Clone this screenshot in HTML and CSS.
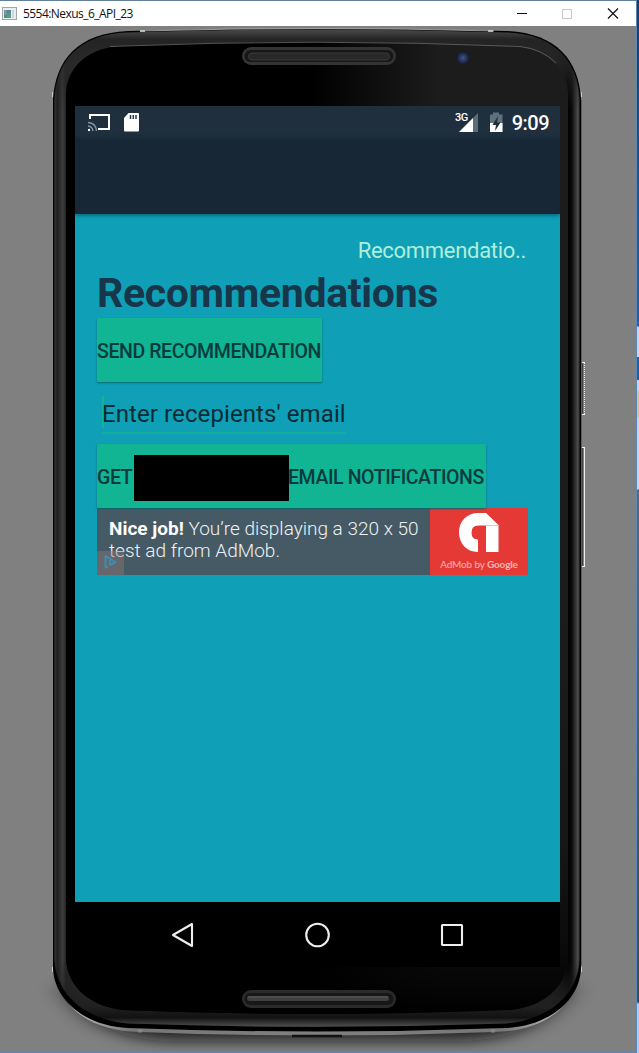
FILE: index.html
```
<!DOCTYPE html>
<html lang="en">
<head>
<meta charset="utf-8">
<title>5554:Nexus_6_API_23</title>
<link rel="stylesheet" href="styles.css">
</head>
<body>
<div class="desktop">
<div class="window">
  <header class="titlebar">
    <svg class="app-icon" width="15" height="13" viewBox="0 0 15 13"><rect x=".5" y=".5" width="14" height="12" fill="#e9eef2" stroke="#a2a6aa"/><rect x="2" y="3" width="7" height="8" fill="#528b91"/><path d="M2 3h3v5H2z" fill="#7894ad"/><path d="M5 6h4v5H4z" fill="#579c7d"/><path d="M10 3h2v8h-2z" fill="#cdd8df"/></svg>
    <span class="title">5554:Nexus_6_API_23</span>
    <svg class="controls" width="106" height="13" viewBox="0 0 106 13" fill="none"><path d="M0 6.5h10" stroke="#111"/><rect x="45.500" y="2.500" width="9" height="9" stroke="#c9c9c9"/><path d="M91 1.500l10 10M101 1.500l-10 10" stroke="#111" stroke-width="1.200"/></svg>
  </header>
  <main class="stage">
    <svg class="shell" width="637" height="1026" viewBox="0 26 637 1026">
      <defs>
        <linearGradient id="rimX" gradientUnits="userSpaceOnUse" x1="53" y1="0" x2="581" y2="0">
          <stop offset="0" stop-color="#444"/><stop offset=".008" stop-color="#1e1e1e"/><stop offset=".018" stop-color="#3c3c3c"/><stop offset=".025" stop-color="#242424"/><stop offset=".06" stop-color="#303030"/><stop offset=".94" stop-color="#1c1c1c"/><stop offset=".974" stop-color="#000"/><stop offset=".982" stop-color="#080808"/><stop offset=".994" stop-color="#4c4c4c"/><stop offset="1" stop-color="#161616"/>
        </linearGradient>
        <linearGradient id="rimTop" gradientUnits="userSpaceOnUse" x1="0" y1="29" x2="0" y2="110">
          <stop offset="0" stop-color="#4b4b4b"/><stop offset=".13" stop-color="#242424"/><stop offset=".5" stop-color="#292929" stop-opacity=".7"/><stop offset="1" stop-color="#222" stop-opacity="0"/>
        </linearGradient>
        <linearGradient id="rimBottom" gradientUnits="userSpaceOnUse" x1="0" y1="960" x2="0" y2="1027">
          <stop offset="0" stop-color="#222" stop-opacity="0"/><stop offset=".7" stop-color="#202020"/><stop offset=".86" stop-color="#121212"/><stop offset="1" stop-color="#515151"/>
        </linearGradient>
        <linearGradient id="face" gradientUnits="userSpaceOnUse" x1="310" y1="0" x2="440" y2="0">
          <stop offset="0" stop-color="#000"/><stop offset="1" stop-color="#1c1c1c"/>
        </linearGradient>
        <linearGradient id="faceFade" x1="0" y1="0" x2="0" y2="1">
          <stop offset="0" stop-color="#000" stop-opacity="0"/><stop offset=".6" stop-color="#000" stop-opacity=".2"/><stop offset=".92" stop-color="#000" stop-opacity=".78"/><stop offset="1" stop-color="#000"/>
        </linearGradient>
        <linearGradient id="silver" gradientUnits="userSpaceOnUse" x1="53" y1="0" x2="581" y2="0">
          <stop offset="0" stop-color="#ccc"/><stop offset=".15" stop-color="#777"/><stop offset=".5" stop-color="#808080"/><stop offset=".85" stop-color="#777"/><stop offset="1" stop-color="#ccc"/>
        </linearGradient>
        <radialGradient id="lens"><stop offset="0" stop-color="#40568c"/><stop offset=".5" stop-color="#27345a"/><stop offset="1" stop-color="#15171f"/></radialGradient>
        <filter id="soft" x="-20%" y="-60%" width="140%" height="220%"><feGaussianBlur stdDeviation="14 7"/></filter>
      </defs>
      <path d="M64 985Q90 1038 170 1041H464Q544 1038 570 985Z" fill="#111" opacity=".8" filter="url(#soft)"/>
      <path d="M53 960C55 1004 86 1031 140 1032Q317 1039 494 1032C548 1031 579 1004 581 960Z" fill="url(#silver)"/>
      <path d="M53 100C55 60 78 33 128 31Q317 26.500 506 31C556 33 579 60 581 100V968C580 1001 548 1026 506 1028Q317 1035 128 1028C86 1026 54 1001 53 968Z" fill="#000"/>
      <path d="M54 100C56 61 79 34 128 32.500Q317 26.500 506 32.500C555 34 578 61 580 100V960C578 995 548 1020 506 1023.500Q317 1030 128 1023.500C86 1020 56 995 54 960Z" fill="url(#rimX)" stroke="#000" stroke-width=".8"/>
      <path d="M54 100C56 61 79 34 128 32.500Q317 26.500 506 32.500C555 34 578 61 580 100V120H54Z" fill="url(#rimTop)"/>
      <path d="M54 950V960C56 995 86 1020 128 1023.500Q317 1030 506 1023.500C548 1020 578 995 580 960V950Z" fill="url(#rimBottom)"/>
      <path d="M66 92C68 66 89 47 122 46Q317 38 512 46C545 47 566 66 568 92V960C566 988 543 1006 512 1010Q317 1018 122 1010C91 1006 68 988 66 960Z" fill="url(#face)"/>
      <path d="M66 600V960C68 988 91 1006 122 1010Q317 1018 512 1010C543 1006 566 988 568 960V600Z" fill="url(#faceFade)"/>
      <path d="M110 46.500Q317 38 520 46.500Q542 49 556 63" fill="none" stroke="#777" stroke-width=".8" opacity=".85"/>
      <path d="M140 31Q317 26 494 31" fill="none" stroke="#b5b5b5" stroke-width=".8"/>
      <path d="M140 31h5M488 31h5" stroke="#ddd" stroke-width="1.500"/>
      <path d="M52.500 92v5M581.500 92v5M52.500 967v5M581.500 967v5" stroke="#ccc"/>
      <path d="M581.500 100v865" stroke="#5c5c5c"/>
      <path d="M292 1036h50" stroke="#111" stroke-width="2.500"/>
      <path d="M140 1029v4M493 1029v4" stroke="#999" stroke-width="4" opacity=".4"/>
      <g>
        <rect x="242" y="47" width="154" height="18" rx="9" fill="#343434"/><rect x="244.500" y="50" width="149" height="12" rx="6" fill="#171717"/><rect x="248.500" y="53" width="141" height="7" rx="3.500" fill="#2a2728" stroke="#3c3a3a"/>
        <rect x="242" y="990" width="154" height="18" rx="9" fill="#2b2b2b"/><rect x="244.500" y="993" width="149" height="12" rx="6" fill="#171717"/><rect x="247" y="996" width="142" height="5" rx="2.500" fill="#3f3f3f"/><path d="M248 997h140" stroke="#5c5c5c"/>
      </g>
      <circle cx="463" cy="58" r="7" fill="url(#lens)"/>
      <g fill="none"><path d="M582.500 363v51M582.500 448v118" stroke="#444"/><path d="M584.500 363v51" stroke="#eee" stroke-dasharray="1 1"/><path d="M584.500 448v118" stroke="#eee"/><path d="M582 362.500h3M582 414.500h3M582 447.500h3M582 566.500h3" stroke="#f2f2f2"/></g>
    </svg>
    <div class="screen">
      <div class="statusbar">
        <svg class="notices" width="53" height="22" viewBox="88 112 53 22"><path d="M90 119v-4h19v14h-11" fill="none" stroke="#fff" stroke-width="2"/><path d="M88 122.500q8 .5 8.500 8.500M88 126q4.500.5 5 5" fill="none" stroke="#8494a0" stroke-width="1.400"/><circle cx="89" cy="130" r="1.200" fill="#fff"/><path d="M128.500 113h9.500q1 0 1 1v16.500q0 1-1 1h-13q-1 0-1-1V118z" fill="#fff"/><path d="M130.500 115v4M133.300 115v4M136 115v4" stroke="#253746" stroke-width="1.500"/></svg>
        <div class="system">
          <span class="network">3G</span>
          <svg width="46" height="22" viewBox="458 112 46 22"><path d="M459 132l19-19v19z" fill="#5c6c78"/><path d="M459 132l14-14v14z" fill="#fff"/><path d="M490 114.500h3v-2h6v2h3.500V132H490z" fill="#60707c"/><path d="M490 123h12.500v9H490z" fill="#fff"/><path d="M498 116l-5.500 9h3.500l-1 6 5.500-8.500H497z" fill="#1e2d3b"/></svg>
          <span class="clock">9:09</span>
        </div>
      </div>
      <div class="toolbar"></div>
      <section class="content">
        <div class="scroll-title">Recommendatio..</div>
        <h1>Recommendations</h1>
        <button class="btn send"><span>SEND RECOMMENDATION</span></button>
        <div class="field"><span>Enter recepients' email</span></div>
        <button class="btn get"><span class="get-word">GET</span><i class="redacted"></i><span class="get-rest">EMAIL NOTIFICATIONS</span></button>
        <div class="ad">
          <div class="ad-copy"><div class="line1"><b>Nice job!</b> You’re displaying a 320 x 50</div><div class="line2">test ad from AdMob.</div></div>
          <svg class="choices" width="27" height="24" viewBox="0 0 27 24"><path d="M0 0h27v24H0z" fill="#8d7777" opacity=".45"/><path d="M11 15.500l-2.500 1V5l10 6-5.500 3V9" fill="none" stroke="#3d8db0" stroke-width="2" stroke-linejoin="round"/></svg>
          <div class="admob">
            <svg width="42" height="41" viewBox="0 0 42 41"><path d="M20 40C8 40 1 31 1 20.500C1 9 9 1 20 1h8l12.500 12v27H28V13.500h-7.500q-7 0-7 7t6.500 7z" fill="#fff"/><path d="M28 13h12v1H28z" fill="#ccc"/></svg>
            <span>AdMob by <b>Google</b></span>
          </div>
        </div>
      </section>
      <nav class="navbar">
        <svg width="24" height="26" viewBox="0 0 24 26"><path d="M21 2v22L2 13z"/></svg>
        <svg width="26" height="26" viewBox="0 0 26 26"><circle cx="12.500" cy="13" r="11.300"/></svg>
        <svg width="24" height="24" viewBox="0 0 24 24"><rect x="2" y="2" width="20" height="20" rx=".5"/></svg>
      </nav>
    </div>
  </main>
</div>
<aside class="behind"></aside>
</div>
</body>
</html>
```
FILE: styles.css
```
* { box-sizing: border-box; }
body { margin: 0; font-family: Roboto, sans-serif; overflow: hidden; }
.desktop { display: grid; grid-template-columns: 637px 2px; width: 639px; height: 1053px; }
.window { display: flex; flex-direction: column; border-top: 1px solid #5f7f9c; border-bottom: 1px solid #5e86b0; border-right: 1px solid #5d88b5; background: #808080; }
.behind { background: linear-gradient(#123d6b 0, #1e5795 200px, #285f9e 326px, #c8d4e6 327px, #c8d4e6 357px, #1c62a8 357px, #1c62a8 380px, #c8d4e6 380px, #c8d4e6 390px, #d5c29d 391px, #d5c29d 418px, #c8d4e6 418px, #c8d4e6 489px, #5c6879 490px, #3d4b53 1002px, #b4c9e6 1004px); }
.titlebar { display: flex; align-items: center; height: 25px; flex: none; padding-left: 2px; background: #fff; }
.title { margin-left: 6px; flex: 1; font: 12px/16px "Open Sans", sans-serif; letter-spacing: -.55px; color: #111; white-space: nowrap; }
.controls { margin-right: 13px; }
.stage { position: relative; flex: 1; padding: 80px 0 0 75px; }
.shell { position: absolute; left: 0; top: 0; }
.screen { position: relative; width: 485px; background: #0f9fb6; overflow: hidden; }
.statusbar { position: relative; z-index: 1; height: 33px; display: flex; justify-content: space-between; align-items: flex-start; padding: 6px 11px 0 13px; color: #fff; background: linear-gradient(#1f2f3e 28px, #182938); }
.system { display: flex; height: 22px; }
.network { font: 500 11px/12px Roboto, sans-serif; margin-right: -10px; z-index: 1; letter-spacing: -.5px; }
.clock { margin-left: 8px; font: 500 20px/22px Roboto, sans-serif; letter-spacing: -.5px; white-space: nowrap; }
.toolbar { position: relative; height: 75px; background: #172736; box-shadow: 0 1px 4px #07566d; }
.content { height: 688px; padding: 23px 32px 0 22px; display: flex; flex-direction: column; align-items: flex-start; }
.scroll-title { align-self: flex-end; height: 28px; line-height: 28px; font-size: 22px; letter-spacing: -.3px; margin-right: 2px; color: #afeed9; white-space: nowrap; }
h1 { margin: 4px 0 0; height: 49px; line-height: 49px; font-size: 41px; font-weight: 700; letter-spacing: -.33px; color: #17364a; white-space: nowrap; }
.btn { border: 0; border-radius: 1px; padding: 0; display: flex; align-items: center; height: 64px; background: #11b493; color: #083b3e; font: 500 19.5px/24px Roboto, sans-serif; letter-spacing: -.4px; white-space: nowrap; box-shadow: 0 1px 2px #08666e; }
.btn > * { flex: none; }
.btn span { padding-top: 3px; }
.send { width: 225px; }
.field { margin: 8px 0 10px 5px; width: 244px; height: 44px; border-bottom: 2px solid #13af99; padding-top: 7px; font-size: 24px; line-height: 34px; letter-spacing: .09px; color: #072c35; white-space: nowrap; background: linear-gradient(#11b493, #11b493) 0 6px / 2px 32px no-repeat; }
.get { width: 389px; position: relative; z-index: 1; }
.get-word { width: 37px; text-align: left; }
.redacted { width: 155px; height: 46px; margin-top: 4px; background: #000; }
.get-rest { margin-left: -1px; }
.ad { position: relative; display: flex; width: 431px; height: 67px; background: #455a65; }
.ad-copy { width: 333px; padding: 10px 0 0 12px; font-size: 19px; font-weight: 300; line-height: 22px; color: #eef2f4; white-space: nowrap; }
.ad-copy b { font-weight: 700; color: #fff; }
.choices { position: absolute; left: 0; bottom: 0; }
.admob { width: 98px; display: flex; flex-direction: column; align-items: center; padding-top: 4px; background: #e53935; color: #f5b7b5; font: 10px/14px Lato, sans-serif; letter-spacing: -.15px; white-space: nowrap; }
.admob span { margin-top: 4px; }
.admob b { font-weight: 700; }
.navbar { height: 65px; display: flex; align-items: center; justify-content: space-between; padding: 0 96px; background: #000; }
.navbar svg { fill: none; stroke: #eee; stroke-width: 2.100; stroke-linejoin: round; }
```
